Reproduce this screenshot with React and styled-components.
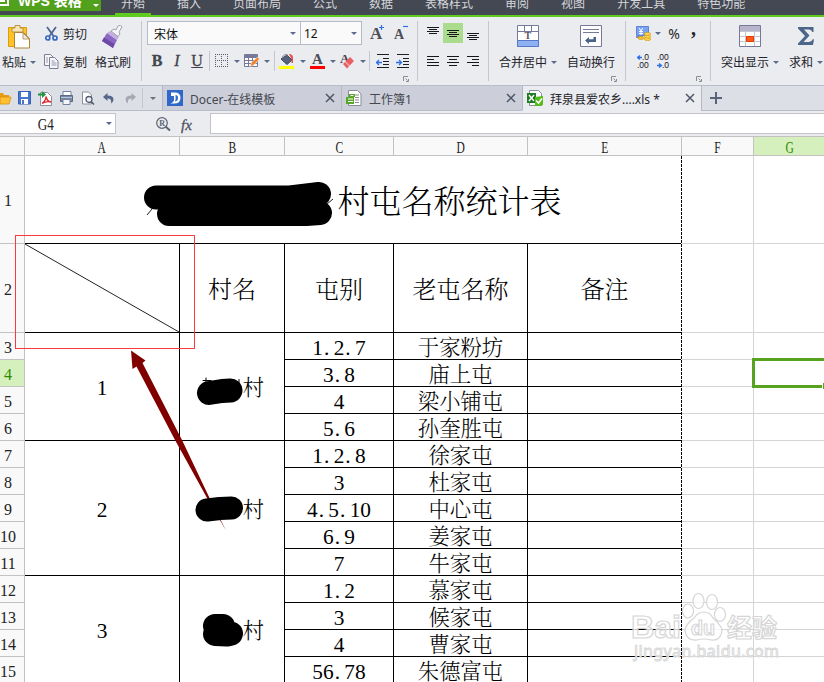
import styled, { createGlobalStyle } from "styled-components";

const GlobalStyle = createGlobalStyle`
  * {
    box-sizing: border-box;
  }

  body {
    margin: 0;
    overflow: hidden;
    background: #fff;
    font-family: "Noto Sans", "Noto Sans CJK SC", sans-serif;
    font-size: 12px;
    color: #23252b;
  }

  svg {
    display: block;
    flex: none;
  }
`;

const ui = `"Noto Sans CJK SC", "Noto Sans", sans-serif`;
const song = `"Liberation Serif", "Noto Serif CJK SC", "Noto Sans CJK SC", serif`;

const Window = styled.div`
  position: relative;
  width: 824px;
  height: 682px;
  overflow: hidden;
  background: #ebecf0;
  font-family: ${ui};
`;

/* ---------- menu ---------- */

const MenuBar = styled.div`
  display: flex;
  height: 17px;
  background: #444852;
  border-bottom: 2px solid #5fcb1f;
`;

const AppButton = styled.div`
  display: flex;
  align-items: center;
  width: 101px;
  height: 11px;
  overflow: hidden;
  background: #52a11d;
  color: #fff;
`;

const AppName = styled.span`
  width: 84px;
  padding-left: 9px;
  font-family: "Liberation Sans", "Noto Sans CJK SC", sans-serif;
  font-size: 14px;
  font-weight: bold;
  line-height: 16px;
  margin-top: -10px;
  white-space: nowrap;
`;

const MenuList = styled.div`
  display: flex;
  gap: 20px;
  padding-left: 14px;
`;

const MenuItem = styled.div`
  height: 15px;
  padding: 0 6px;
  color: #d4d6db;
  line-height: 18px;
  white-space: nowrap;
  border-bottom: ${(p) => (p.$active ? "2px solid #5fcb1f" : "0")};
  overflow: hidden;

  span {
    display: block;
    margin-top: -6px;
  }
`;

/* ---------- ribbon ---------- */

const Ribbon = styled.div`
  display: flex;
  height: 69px;
  padding-top: 4px;
  border-bottom: 1px solid #b9bcc9;
  background: #ebecf0;
`;

const Group = styled.div`
  display: flex;
  flex: none;
  position: relative;
  width: ${(p) => p.$w}px;
  height: 60px;
  border-right: ${(p) => (p.$last ? 0 : 1)}px solid #c3c5cf;
`;

const Stack = styled.div`
  display: flex;
  flex-direction: column;
  flex: none;
  padding-left: ${(p) => p.$pad || 0}px;
`;

const BigButton = styled.div`
  display: flex;
  flex-direction: column;
  align-items: center;
  flex: none;
  width: ${(p) => p.$w}px;
  margin-left: ${(p) => p.$gap || 0}px;
  padding-top: 4px;
`;

const Caption = styled.div`
  display: flex;
  align-items: center;
  gap: 4px;
  height: 18px;
  margin-top: ${(p) => p.$top || 4}px;
  line-height: 18px;
  white-space: nowrap;
`;

const SmallButton = styled.div`
  display: flex;
  align-items: center;
  height: 25px;
  margin-bottom: 3px;
  line-height: 18px;
  white-space: nowrap;
`;

const SmallIcon = styled.span`
  display: flex;
  width: 19px;
  padding-left: ${(p) => p.$pad || 0}px;
`;

const Caret = styled.i`
  flex: none;
  width: 0;
  height: 0;
  border: 3px solid transparent;
  border-top-color: ${(p) => p.$color || "#5c6a8c"};
  border-bottom: 0;
`;

const ComboRow = styled.div`
  display: flex;
  align-items: center;
  height: 24px;
`;

const Combo = styled.div`
  display: flex;
  align-items: center;
  justify-content: space-between;
  width: ${(p) => p.$w}px;
  height: 24px;
  margin-right: -1px;
  padding: 0 4px 0 ${(p) => p.$pad}px;
  border: 1px solid #b6b9c8;
  background: #fafafb;
  color: #111;
  font-family: ${(p) => (p.$latin ? `"Noto Sans", sans-serif` : "inherit")};
`;

const ToolRow = styled.div`
  display: flex;
  align-items: center;
  height: 20px;
  margin-top: ${(p) => p.$top || 0}px;
`;

const Tool = styled.div`
  display: flex;
  align-items: center;
  justify-content: center;
  flex: none;
  width: ${(p) => p.$w || 20}px;
  height: 20px;
  background: ${(p) => (p.$on ? "#abdb8c" : "transparent")};
`;

const Glyph = styled.span`
  font-family: "Liberation Serif", serif;
  font-size: 16px;
  line-height: 18px;
  font-weight: ${(p) => (p.$bold ? "bold" : "normal")};
  font-style: ${(p) => (p.$italic ? "italic" : "normal")};
  text-decoration: ${(p) => (p.$under ? "underline" : "none")};
  color: #42454d;
  -webkit-text-stroke: 0.3px #42454d;
`;

const Percent = styled.span`
  font-family: "Noto Sans", sans-serif;
  font-size: 14px;
`;

const Comma = styled.span`
  font: bold 20px/10px "Liberation Serif", serif;
  margin-top: -10px;
`;

const Divider = styled.div`
  flex: none;
  width: 1px;
  height: 20px;
  background: #c3c5cf;
`;

const Launcher = styled.svg`
  position: absolute;
  right: 8px;
  bottom: -1px;
`;

/* ---------- document tabs ---------- */

const TabBar = styled.div`
  display: flex;
  height: 25px;
  background: #dddfe6;
`;

const QuickBar = styled.div`
  display: flex;
  align-items: center;
  width: 162px;
  border-bottom: 1px solid #b9bcc9;
`;

const QuickIcon = styled.div`
  display: flex;
  flex: none;
  width: ${(p) => p.$w}px;
`;

const DocTab = styled.div`
  display: flex;
  align-items: center;
  width: ${(p) => p.$w}px;
  padding: 0 6px 0 4px;
  border-left: 1px solid #b4b7c4;
  border-bottom: 1px solid ${(p) => (p.$active ? "#ebecf0" : "#b9bcc9")};
  background: ${(p) => (p.$active ? "#ebecf0" : "#cccfda")};
  color: ${(p) => (p.$active ? "#23252b" : "#44474f")};
  white-space: nowrap;
`;

const TabTitle = styled.span`
  flex: 1;
  padding-left: 7px;
  padding-top: 2px;
  font-family: "Noto Sans", ${ui};
`;

const TabRest = styled.div`
  flex: 1;
  display: flex;
  align-items: center;
  padding-left: 8px;
  border-left: 1px solid #b4b7c4;
  border-bottom: 1px solid #b9bcc9;
`;

/* ---------- formula bar ---------- */

const FormulaBar = styled.div`
  display: flex;
  height: 25px;
  padding-top: 2px;
`;

const NameBox = styled.div`
  display: flex;
  align-items: center;
  width: 116px;
  height: 21px;
  padding-right: 3px;
  border: 1px solid #c2c4ca;
  border-left: 0;
  background: #fff;
`;

const NameText = styled.span`
  flex: 1;
  padding: 2px 14px 0 0;
  text-align: center;
`;

const FormulaTools = styled.div`
  display: flex;
  align-items: center;
  width: 94px;
  padding-left: 40px;
  gap: 10px;
`;

const Fx = styled.span`
  font: italic 15px/20px "Liberation Serif", serif;
  color: #4a5160;
  -webkit-text-stroke: 0.3px #4a5160;
`;

const FormulaInput = styled.div`
  flex: 1;
  height: 21px;
  border: 1px solid #c2c4ca;
  border-right: 0;
  background: #fff;
`;

/* ---------- sheet ---------- */

const Sheet = styled.div`
  position: relative;
  display: grid;
  grid-template-columns: 25px 155px 105px 109px 134px 154px 72px 72px;
  grid-template-rows: 20px 88px 89px repeat(13, 27px);
  background: #fff;
  font-family: ${song};
  color: #000;
`;

const Narrow = styled.span`
  display: inline-block;
  transform: scaleX(${(p) => p.$scale || 0.72});
  font: 16px/18px "Liberation Serif", serif;
  color: ${(p) => p.$color || "#222"};
`;

const HeadCell = styled.div`
  display: flex;
  align-items: center;
  justify-content: center;
  border: 1px solid #c2c2c2;
  border-left: 0;
  background: ${(p) => (p.$on ? "#d5f0bd" : "#f9f9f9")};
  padding-top: 3px;
`;

const RowHead = styled.div`
  grid-column: 1;
  grid-row: ${(p) => p.$row};
  display: flex;
  align-items: center;
  justify-content: center;
  padding: 3px 8px 0 0;
  border-right: 1px solid #c2c2c2;
  border-bottom: 1px solid #c2c2c2;
  background: ${(p) => (p.$on ? "#d5f0bd" : "#f9f9f9")};
  color: ${(p) => (p.$on ? "#2f8a00" : "#222")};
  font-size: 16px;
  line-height: 18px;
`;

const Cell = styled.div`
  grid-column: ${(p) => p.$col} / span ${(p) => p.$cols || 1};
  grid-row: ${(p) => p.$row} / span ${(p) => p.$rows || 1};
  display: flex;
  align-items: center;
  justify-content: center;
  border-right: 1px solid ${(p) => p.$line || "#000"};
  border-bottom: 1px solid ${(p) => p.$line || "#000"};
  padding-top: ${(p) => p.$top || 0}px;
  font-size: ${(p) => p.$size || 21.33}px;
  font-weight: 300;
  line-height: 1;
  white-space: nowrap;
`;

/* keeps the ending of a name in place behind a blacked out beginning */
const Hidden = styled.span`
  display: inline-block;
  width: ${(p) => p.$w}px;
`;

const Dot = styled.span`
  display: inline-block;
  width: 0.5em;
  padding-left: 1px;
`;

const DiagonalCell = styled(Cell)`
  padding: 0;
  align-items: stretch;
`;

const PageBreak = styled.div`
  grid-column: 6;
  grid-row: 2 / -1;
  justify-self: end;
  width: 1px;
  background: repeating-linear-gradient(#000 0 3px, #fff 3px 4px);
`;

const Selection = styled.div`
  position: absolute;
  left: 752px;
  top: 222px;
  width: 80px;
  height: 30px;
  border: 3px solid #57a31f;

  &::after {
    content: "";
    position: absolute;
    left: 67px;
    bottom: -4px;
    width: 6px;
    height: 6px;
    background: #57a31f;
    border: 1px solid #fff;
    border-width: 1px 0 0 1px;
  }
`;

const Overlay = styled.svg`
  position: absolute;
  left: 0;
  top: 0;
`;

/* ---------- icons ---------- */

const Close = () => (
  <svg width="10" height="10" viewBox="0 0 10 10" stroke="#4d5668" strokeWidth="1.5">
    <path d="M1 1l8 8M9 1L1 9" />
  </svg>
);

const PasteIcon = () => (
  <svg width="22" height="24" viewBox="0 0 22 24">
    <path d="M.5 2.500h18v19H.5z" fill="#ffc423" stroke="#dd9a12" />
    <path d="M4 3h3V.5h5V3h3v4H4z" fill="#f3e6b8" stroke="#b78d2e" strokeWidth=".9" />
    <path d="M6.500 7.500h9l6 6V23h-15z" fill="#fff" stroke="#b0853a" />
    <path d="M15 8v6h6z" fill="#ececf0" stroke="#b0853a" strokeWidth=".8" />
  </svg>
);

const CutIcon = () => (
  <svg width="13" height="16" viewBox="0 0 13 16" fill="none" stroke="#3467bd">
    <path d="M2 1l6.500 9M11 1l-6.500 9" stroke="#4d6595" strokeWidth="1.800" />
    <circle cx="2.800" cy="12" r="2" strokeWidth="1.700" />
    <circle cx="10" cy="12" r="2" strokeWidth="1.700" />
  </svg>
);

const CopyIcon = () => (
  <svg width="15" height="15" viewBox="0 0 15 15" fill="#f7f7fa" stroke="#7d7f96">
    <path d="M.5.5h6l3 3v8h-9z" />
    <path d="M5.500 3.500h5l3.500 3.500v7.500H5.500z" />
    <path d="M7.500 7h3M7.500 9h5M7.500 11h5M2 4h2M2 6h2M2 8h2" strokeWidth=".8" />
  </svg>
);

const BrushIcon = () => (
  <svg width="22" height="24" viewBox="0 0 22 24">
    <path d="M5 8l10 7-4 8L0 16z" fill="#8c68c2" />
    <path d="M2 12.500l10.500 6.500-1.500 4L0 16z" fill="#6d4aa6" />
    <path d="M5 8l3-2 9 6-2 3z" fill="#c3aee2" />
    <path d="M9 6l3-2 2 1 2-4q3-2 4 1l-3 5 1 2-2 2.500z" fill="#f6f6f9" stroke="#8b8b98" strokeWidth=".8" />
  </svg>
);

const BordersIcon = () => (
  <svg width="14" height="14" viewBox="0 0 14 14" stroke="#585c68" strokeDasharray="1 1" fill="none">
    <path d="M0 .5h14M0 6.500h14M0 12.500h14M.5 0v13M6.500 0v13M12.500 0v13" />
  </svg>
);

const TableBrushIcon = () => (
  <svg width="16" height="14" viewBox="0 0 16 14">
    <path d="M.5.5h13v12H.5z" fill="#fff" stroke="#77799a" />
    <path d="M1 1h12v3H1z" fill="#77799a" />
    <path d="M1 6.500h12M1 9.500h12M4.500 4v8M8.500 4v8" stroke="#77799a" />
    <path d="M6 12.500l1.500-4 6-5.500 2 2-5.500 6z" fill="#f2832b" stroke="#fff" strokeWidth=".5" />
  </svg>
);

const FillIcon = () => (
  <svg width="16" height="16" viewBox="0 0 16 16">
    <path d="M2 6l6-4 5 5-5 4.500z" fill="#56617a" stroke="#3e475c" />
    <path d="M3 4q3-4 6-2" fill="none" stroke="#8b91a3" />
    <path d="M10 1q4 0 4 4v5h-1.500V6z" fill="#ef4b4b" />
    <path d="M0 13h15v3H0z" fill="#ff0" />
  </svg>
);

const FontColorIcon = () => (
  <svg width="16" height="16" viewBox="0 0 16 16">
    <text x="2" y="11" fontFamily="Liberation Serif" fontSize="15" fontWeight="bold" fill="#4c4f57">A</text>
    <path d="M0 13h15v3H0z" fill="#f00" />
  </svg>
);

const EraserIcon = () => (
  <svg width="16" height="16" viewBox="0 0 16 16">
    <text x="0" y="10" fontFamily="Liberation Serif" fontSize="13" fontWeight="bold" fill="#42454d">A</text>
    <path d="M3 11l7-7 4 4-7 7.500z" fill="#e95f63" />
    <path d="M5 8.500l4.500 4.500" stroke="#fff" strokeWidth=".8" />
  </svg>
);

const SizeIcon = ({ plus }) => (
  <svg width="15" height="18" viewBox="0 0 15 18">
    <text x="0" y="15" fontFamily="Liberation Serif" fontSize={plus ? 17 : 14} fontWeight="bold" fill="#4c4f57">A</text>
    <path d={plus ? "M9 3.500h5M11.500 1v5" : "M9 2.500h5"} stroke="#2b70e8" strokeWidth="1.200" />
  </svg>
);

const IndentIcon = ({ right }) => (
  <svg width="14" height="14" viewBox="0 0 14 14" stroke="#1d1f24" fill="none">
    <path d="M1 .5h12M7 4.500h6M7 7.500h6M7 10.500h6M1 13.500h12" />
    <path d={right ? "M0 8.500h5M3 6l2.500 2.500L3 11" : "M6 8.500H1M3 6L.5 8.500 3 11"} stroke="#2b70e8" strokeWidth="1.300" />
  </svg>
);

/* four text lines; widths as [start, end] */
const LinesIcon = ({ lines, gap = 3, top = 0 }) => (
  <svg width="13" height="18" viewBox="0 0 13 18" stroke="#17181c">
    {lines.map(([a, b], i) => (
      <path key={i} d={`M${a} ${top + i * gap + 0.5}H${b}`} />
    ))}
  </svg>
);

const centered = [[0, 12], [2, 10], [0, 12], [2, 10]];
const leftLines = [[0, 12], [0, 7], [0, 12], [0, 7]].map(([a, b], i) => (i === 3 ? [0, 12] : [a, b]));
const vertical = [[0, 12], [2, 10], [0, 12], [2, 10]];

const MergeIcon = () => (
  <svg width="23" height="23" viewBox="0 0 23 23">
    <path d="M.5.5h21v21H.5z" fill="#fff" stroke="#77799a" />
    <path d="M.5 15.500h21v6H.5z" fill="#8fb0f3" stroke="#5878cc" />
    <path d="M0 6.500h22M7.500 0v6M14.500 0v6" stroke="#77799a" />
    <text x="7.500" y="14" fontFamily="Liberation Serif" fontSize="10" fontWeight="bold" fill="#555768">T</text>
  </svg>
);

const WrapIcon = () => (
  <svg width="23" height="23" viewBox="0 0 23 23">
    <path d="M.5.5h21v21H.5z" fill="#fdfdfe" stroke="#77799a" />
    <path d="M3 4.500h16M3 7.500h16" stroke="#77799a" />
    <path d="M5 15.500l4-3.500v2.300h4.500V12h2.500v5H9v2z" fill="#4a6288" />
  </svg>
);

const MoneyIcon = () => (
  <svg width="16" height="15" viewBox="0 0 16 15">
    <path d="M.5.5h12v9H.5z" fill="#7aa2f2" stroke="#5f83d8" />
    <path d="M0 10h7v2H0z" fill="#7b8cba" />
    <path d="M3 2l2 2.500L7 2M3 5.500h4M3 7.500h4M5 4v5" stroke="#fff" fill="none" />
    <ellipse cx="5" cy="12" rx="3" ry="1.600" fill="#f2bf30" stroke="#d59a10" strokeWidth=".6" />
    {[13, 10.5, 8].map((y) => (
      <ellipse key={y} cx="11.500" cy={y} rx="3.200" ry="1.600" fill="#ffd54a" stroke="#d59a10" strokeWidth=".7" />
    ))}
  </svg>
);

const DecimalIcon = ({ less }) => (
  <svg width="14" height="15" viewBox="0 0 14 15" fontFamily="Liberation Sans" fontSize="8.5" fill="#17181c">
    <text x={less ? 0 : 5} y="6">{less ? ".00" : ".0"}</text>
    <text x={less ? 5 : 0} y="14">{less ? ".0" : ".00"}</text>
    {less ? (
      <path d="M0 11.500h4M2 9.500l2.500 2L2 13.500" stroke="#2b70e8" fill="none" strokeWidth="1.300" />
    ) : (
      <path d="M5 3.500H1M3 1.500L.5 3.500 3 5.500" stroke="#2b70e8" fill="none" strokeWidth="1.300" />
    )}
  </svg>
);

const HighlightIcon = () => (
  <svg width="23" height="23" viewBox="0 0 23 23">
    <path d="M.5.5h21v21H.5z" fill="#fff" />
    <path d="M1 1h20v5H1z" fill="#b9b3cb" />
    <path d="M0 6.500h22M0 11.500h22M0 16.500h22M6.500 7v15M15.500 7v15" stroke="#c4c5d2" />
    <path d="M.5.5h21v21H.5z" fill="none" stroke="#77799a" />
    <path d="M7.500 11.500h7v5h-7z" fill="#ff5a1c" stroke="#e23d00" />
  </svg>
);

const SumIcon = () => (
  <svg width="18" height="23" viewBox="0 0 18 23">
    <path d="M1 2h15.500v5h-1.200q-.8-2.500-3-2.500H7l5.500 6L6.500 17H12q2.800 0 3.700-2.800h1.300L16 20H1v-1.500l7-7.500-7-7.500z" fill="#4d6588" />
  </svg>
);

const LauncherIcon = () => (
  <Launcher width="6" height="6" viewBox="0 0 6 6" fill="none" stroke="#8a8c94">
    <path d="M.5 5V.5H5M3 5.500h2.500V3M2.500 2.500l2 2" />
  </Launcher>
);

const FolderIcon = () => (
  <svg width="12" height="13" viewBox="0 0 12 13">
    <path d="M0 1h3l1 2h5v8H0z" fill="#e69d12" />
    <path d="M0 5h11L9 12H0z" fill="#ffbf32" stroke="#d88f0e" strokeWidth=".8" />
  </svg>
);

const SaveIcon = () => (
  <svg width="13" height="14" viewBox="0 0 13 14">
    <path d="M.5.5h12v12.500H.5z" fill="#4674d0" stroke="#3460b8" />
    <path d="M3 1h7v5H3zM3 8h7v5H3z" fill="#fff" />
    <path d="M4 9h2v4H4z" fill="#4674d0" />
  </svg>
);

const PdfIcon = () => (
  <svg width="15" height="15" viewBox="0 0 15 15">
    <path d="M2.500 1.500h7l4 4v9h-11z" fill="#fff" stroke="#8d8f9d" />
    <path d="M4 12.500q4-3 4-7 1 5 5 5.500-5-1-9 1.500z" fill="none" stroke="#e2262b" strokeWidth="1.300" />
    <path d="M0 2.500h4V0l4 3.500L4 7V4.500H0z" fill="#1c9440" />
  </svg>
);

const PrintIcon = () => (
  <svg width="14" height="14" viewBox="0 0 14 14">
    <path d="M3 .5h8v5H3z" fill="#fff" stroke="#75829d" />
    <path d="M.5 4.500h12v6H.5z" fill="#7888a8" stroke="#596985" />
    <path d="M1 6h11v1H1z" fill="#b8c4d8" />
    <path d="M3 8.500h7v5H3z" fill="#f4f6fa" stroke="#75829d" />
  </svg>
);

const PreviewIcon = () => (
  <svg width="13" height="15" viewBox="0 0 13 15" fill="none">
    <path d="M.5 1h6l3 3v9h-9z" fill="#fff" stroke="#8d8f9d" />
    <circle cx="7" cy="8.500" r="3" fill="#eef2f8" stroke="#555b6c" strokeWidth="1.300" />
    <path d="M9 10.500l3 3" stroke="#555b6c" strokeWidth="1.600" />
  </svg>
);

const ArrowIcon = ({ redo }) => (
  <svg width="11" height="11" viewBox="0 0 11 11">
    <path
      d="M0 4l4.500-4v2.500q6 0 6 4 0 2-2.500 4 1-5-3.500-5V8z"
      fill={redo ? "#a5a8b2" : "#56688a"}
      transform={redo ? "translate(11 0) scale(-1 1)" : undefined}
    />
  </svg>
);

const DocerIcon = () => (
  <svg width="16" height="16" viewBox="0 0 16 16">
    <path d="M0 0h16v16H0z" fill="#3068c9" />
    <path d="M4 2.500h4q5.500 0 5.500 5.500T7 13.500H3q4-1 4-4V6H4z" fill="#fff" />
    <path d="M8.500 5q2.500 0 2.500 3t-3 3.500q1-2 .5-6.500z" fill="#3068c9" />
  </svg>
);

const BookIcon = () => (
  <svg width="16" height="16" viewBox="0 0 16 16">
    <path d="M2.500.5h9l3.500 3.500v11.500H2.500z" fill="#fff" stroke="#8a8d96" />
    <path d="M9 5h4M9 7.500h4M9 10h4M9 12.500h4" stroke="#8a8d96" />
    <path d="M0 7h8v7H0zM3 4h6v3H3z" fill="#58a72b" />
    <path d="M2 9h5M2 11.500h5M4.500 5.500h3" stroke="#fff" />
  </svg>
);

const XlsIcon = () => (
  <svg width="16" height="16" viewBox="0 0 16 16">
    <path d="M2.500.5h9l3 3v12h-12z" fill="#fff" stroke="#8a8d96" />
    <path d="M0 3h9v10H0z" fill="#217a24" />
    <path d="M2 5l5 6M7 5l-5 6" stroke="#fff" strokeWidth="1.400" />
    <path d="M8 7l8-1v9l-3 1H8z" fill="#55bb1b" />
    <path d="M9 10.500l2.500 2.500 3.500-4.500" stroke="#fff" strokeWidth="1.600" fill="none" />
  </svg>
);

const SearchIcon = () => (
  <svg width="15" height="15" viewBox="0 0 15 15" fill="none" stroke="#5b6474">
    <circle cx="6" cy="6" r="5.300" strokeWidth="1.200" />
    <path d="M9.500 9.500l4.500 4" strokeWidth="2" />
    <text x="3.200" y="8.800" fontFamily="Liberation Serif" fontSize="8" fontWeight="bold" fill="#5b6474" stroke="none">R</text>
  </svg>
);

/* ---------- data ---------- */

const menus = ["开始", "插入", "页面布局", "公式", "数据", "表格样式", "审阅", "视图", "开发工具", "特色功能"];
const columns = ["A", "B", "C", "D", "E", "F", "G"];
const headings = ["村名", "屯别", "老屯名称", "备注"];

const villages = [
  { no: "1", rows: 4 },
  { no: "2", rows: 5 },
  { no: "3", rows: 4 },
];

const hamlets = [
  ["1.2.7", "于家粉坊"],
  ["3.8", "庙上屯"],
  ["4", "梁小铺屯"],
  ["5.6", "孙奎胜屯"],
  ["1.2.8", "徐家屯"],
  ["3", "杜家屯"],
  ["4.5.10", "中心屯"],
  ["6.9", "姜家屯"],
  ["7", "牛家屯"],
  ["1.2", "慕家屯"],
  ["3", "候家屯"],
  ["4", "曹家屯"],
  ["56.78", "朱德富屯"],
];

const Numbers = ({ value }) => (
  <span>{value.split("").map((c, i) => (c === "." ? <Dot key={i}>.</Dot> : c))}</span>
);

function RibbonBar() {
  return (
    <Ribbon>
      <Group $w={142}>
        <BigButton $w={38}>
          <PasteIcon />
          <Caption>粘贴 <Caret /></Caption>
        </BigButton>
        <Stack $pad={6}>
          <SmallButton><SmallIcon $pad={1}><CutIcon /></SmallIcon>剪切</SmallButton>
          <SmallButton><SmallIcon><CopyIcon /></SmallIcon>复制</SmallButton>
        </Stack>
        <BigButton $w={52}>
          <BrushIcon />
          <Caption>格式刷</Caption>
        </BigButton>
      </Group>

      <Group $w={276}>
        <Stack $pad={5}>
          <ComboRow>
            <Combo $w={154} $pad={6}>宋体 <Caret /></Combo>
            <Combo $w={62} $pad={3} $latin>12 <Caret /></Combo>
            <Tool $w={32}><SizeIcon plus /></Tool>
            <Tool $w={16}><SizeIcon /></Tool>
          </ComboRow>
          <ToolRow $top={6}>
            <Tool><Glyph $bold>B</Glyph></Tool>
            <Tool><Glyph $italic>I</Glyph></Tool>
            <Tool><Glyph $under>U</Glyph></Tool>
            <Tool $w={2} />
            <Divider />
            <Tool $w={23}><BordersIcon /></Tool>
            <Tool $w={8}><Caret /></Tool>
            <Tool $w={22}><TableBrushIcon /></Tool>
            <Tool $w={8}><Caret /></Tool>
            <Tool $w={3} />
            <Divider />
            <Tool $w={24}><FillIcon /></Tool>
            <Tool $w={8}><Caret /></Tool>
            <Tool $w={22}><FontColorIcon /></Tool>
            <Tool $w={8}><Caret /></Tool>
            <Tool $w={22}><EraserIcon /></Tool>
            <Tool $w={8}><Caret /></Tool>
            <Tool $w={2} />
            <Divider />
            <Tool $w={26}><IndentIcon /></Tool>
            <Tool $w={14}><IndentIcon right /></Tool>
          </ToolRow>
        </Stack>
        <LauncherIcon />
      </Group>

      <Group $w={71}>
        <Stack $pad={5}>
          <ToolRow $top={2}>
            <Tool><LinesIcon lines={vertical} top={3} gap={2} /></Tool>
            <Tool $on><LinesIcon lines={vertical} top={6} gap={2} /></Tool>
            <Tool><LinesIcon lines={vertical} top={9} gap={2} /></Tool>
          </ToolRow>
          <ToolRow $top={8}>
            <Tool><LinesIcon lines={leftLines} top={4} /></Tool>
            <Tool><LinesIcon lines={centered} top={4} /></Tool>
            <Tool><LinesIcon lines={[[0, 12], [5, 12], [0, 12], [5, 12]]} top={4} /></Tool>
          </ToolRow>
        </Stack>
      </Group>

      <Group $w={137}>
        <BigButton $w={58} $gap={10}>
          <MergeIcon />
          <Caption $top={5}>合并居中 <Caret /></Caption>
        </BigButton>
        <BigButton $w={48} $gap={10}>
          <WrapIcon />
          <Caption $top={5}>自动换行</Caption>
        </BigButton>
        <LauncherIcon />
      </Group>

      <Group $w={85}>
        <Stack $pad={10}>
          <ToolRow $top={2}>
            <Tool $w={16}><MoneyIcon /></Tool>
            <Tool $w={11}><Caret /></Tool>
            <Tool $w={22}><Percent>%</Percent></Tool>
            <Tool $w={17}><Comma>,</Comma></Tool>
          </ToolRow>
          <ToolRow $top={8}>
            <Tool $w={15}><DecimalIcon /></Tool>
            <Tool $w={26}><DecimalIcon less /></Tool>
          </ToolRow>
        </Stack>
        <LauncherIcon />
      </Group>

      <Group $w={113} $last>
        <BigButton $w={58} $gap={10}>
          <HighlightIcon />
          <Caption $top={5}>突出显示 <Caret /></Caption>
        </BigButton>
        <BigButton $w={34} $gap={10}>
          <SumIcon />
          <Caption $top={5}>求和 <Caret /></Caption>
        </BigButton>
      </Group>
    </Ribbon>
  );
}

function DocumentTabs() {
  return (
    <TabBar>
      <QuickBar>
        <QuickIcon $w={18}><FolderIcon /></QuickIcon>
        <QuickIcon $w={20}><SaveIcon /></QuickIcon>
        <QuickIcon $w={22}><PdfIcon /></QuickIcon>
        <QuickIcon $w={22}><PrintIcon /></QuickIcon>
        <QuickIcon $w={21}><PreviewIcon /></QuickIcon>
        <QuickIcon $w={22}><ArrowIcon /></QuickIcon>
        <QuickIcon $w={17}><ArrowIcon redo /></QuickIcon>
        <Divider />
        <Tool $w={19}><Caret $color="#6f7178" /></Tool>
      </QuickBar>
      <DocTab $w={179}>
        <DocerIcon />
        <TabTitle>Docer-在线模板</TabTitle>
        <Close />
      </DocTab>
      <DocTab $w={181}>
        <BookIcon />
        <TabTitle>工作簿1</TabTitle>
        <Close />
      </DocTab>
      <DocTab $w={179} $active>
        <XlsIcon />
        <TabTitle>拜泉县爱农乡....xls *</TabTitle>
        <Close />
      </DocTab>
      <TabRest>
        <svg width="12" height="12" viewBox="0 0 12 12" stroke="#59647c" strokeWidth="2">
          <path d="M6 0v12M0 6h12" />
        </svg>
      </TabRest>
    </TabBar>
  );
}

function Spreadsheet() {
  let start = 4;
  return (
    <Sheet>
      <HeadCell />
      {columns.map((c) => (
        <HeadCell key={c} $on={c === "G"}>
          <Narrow $color={c === "G" && "#2f8a00"}>{c}</Narrow>
        </HeadCell>
      ))}
      {Array.from({ length: 15 }, (_, i) => (
        <RowHead key={i} $row={i + 2} $on={i === 3}>{i + 1}</RowHead>
      ))}

      <Cell $col={2} $cols={5} $row={2} $size={32} $top={4}>
        <Hidden $w={193} />村屯名称统计表
      </Cell>
      <DiagonalCell $col={2} $row={3}>
        <svg width="154" height="88" viewBox="0 0 154 88" stroke="#222">
          <path d="M0 0L154 88" />
        </svg>
      </DiagonalCell>
      {headings.map((h, i) => (
        <Cell key={h} $col={i + 3} $row={3} $size={24} $top={4}>{h}</Cell>
      ))}

      {villages.map((v) => {
        const row = start;
        start += v.rows;
        return [
          <Cell key={v.no} $col={2} $row={row} $rows={v.rows} $top={5}>{v.no}</Cell>,
          <Cell key={`${v.no}b`} $col={3} $row={row} $rows={v.rows} $top={5}>
            <Hidden $w={43} />村
          </Cell>,
        ];
      })}
      {hamlets.map(([nums, name], i) => [
        <Cell key={`n${i}`} $col={4} $row={i + 4} $top={6}><Numbers value={nums} /></Cell>,
        <Cell key={`h${i}`} $col={5} $row={i + 4} $top={6}>{name}</Cell>,
        <Cell key={`r${i}`} $col={6} $row={i + 4} />,
      ])}

      {Array.from({ length: 15 }, (_, i) => [
        <Cell key={`f${i}`} $col={7} $row={i + 2} $line="#d4d4d4" />,
        <Cell key={`g${i}`} $col={8} $row={i + 2} $line="#d4d4d4" />,
      ])}
      <PageBreak />
      <Selection />
    </Sheet>
  );
}

function Annotations() {
  return (
    <Overlay width="824" height="682" viewBox="0 0 824 682" fill="none">
      <path d="M152 209l-5 6M327 204l6-5" stroke="#222" />
      <g stroke="#000" strokeLinecap="round" strokeLinejoin="round">
        <path d="M156 197.500H290L319 194" strokeWidth="24" />
        <path d="M169 214H306L320 213" strokeWidth="24" />
        <path d="M203 380.500h8M206 378v4M239 379.500v3" strokeWidth="1" />
      </g>
      <rect x="15.500" y="235.500" width="179" height="113" stroke="#fb3b3b" />
      <path d="M131 350.500L145.500 360.500 142.500 363 182 440 210 499 226 530.500 206.500 497 175 440 136.500 366.500 132.500 369z" fill="#800000" />
      <g stroke="#000" strokeLinecap="round" strokeLinejoin="round">
        <path d="M209 393L222 391 230.500 390.500" strokeWidth="24" />
        <path d="M207 510L220 508.500 231.500 508" strokeWidth="23" />
        <path d="M215 626h8M215 634l12 .5 4-1" strokeWidth="24" />
      </g>
      <g fill="#fff" fillOpacity=".75" stroke="#d6d6d6" strokeWidth="1.200">
        <text x="631" y="638" textLength="50" lengthAdjust="spacingAndGlyphs" fontFamily="Liberation Sans" fontWeight="bold" fontSize="32">Bai</text>
        <ellipse cx="688" cy="611" rx="5.500" ry="7" />
        <ellipse cx="698.500" cy="601" rx="5.500" ry="7.500" />
        <ellipse cx="712" cy="602" rx="5.500" ry="7.500" />
        <ellipse cx="720" cy="614.500" rx="5.500" ry="7" />
        <path d="M704 612q6 0 9 6 8 7 9 12-1 11-11 10-7-2-14 0-11 1-12-10 1-6 9-12 4-6 10-6z" />
        <text x="691" y="635" textLength="24" lengthAdjust="spacingAndGlyphs" fontFamily="Liberation Sans" fontWeight="bold" fontSize="21">du</text>
        <text x="727" y="637" textLength="50" fontFamily="Noto Sans CJK SC" fontWeight="bold" fontSize="25">经验</text>
        <text x="634" y="657" textLength="145" fontFamily="Noto Sans" fontSize="16" strokeWidth=".9">jingyan.baidu.com</text>
      </g>
    </Overlay>
  );
}

function App() {
  return (
    <>
      <GlobalStyle />
      <Window>
        <MenuBar>
          <AppButton>
            <svg width="9" height="11" viewBox="0 0 9 11" fill="none" stroke="#fff" strokeWidth="2">
              <path d="M0 5h8V0M0 1h5" />
            </svg>
            <AppName>WPS 表格</AppName>
            <Caret $color="#fff" />
          </AppButton>
          <MenuList>
            {menus.map((m, i) => (
              <MenuItem key={m} $active={i === 0}><span>{m}</span></MenuItem>
            ))}
          </MenuList>
        </MenuBar>
        <RibbonBar />
        <DocumentTabs />
        <FormulaBar>
          <NameBox>
            <NameText><Narrow $scale={0.82}>G4</Narrow></NameText>
            <Caret />
          </NameBox>
          <FormulaTools>
            <SearchIcon />
            <Fx>fx</Fx>
          </FormulaTools>
          <FormulaInput />
        </FormulaBar>
        <Spreadsheet />
        <Annotations />
      </Window>
    </>
  );
}

export default App;
